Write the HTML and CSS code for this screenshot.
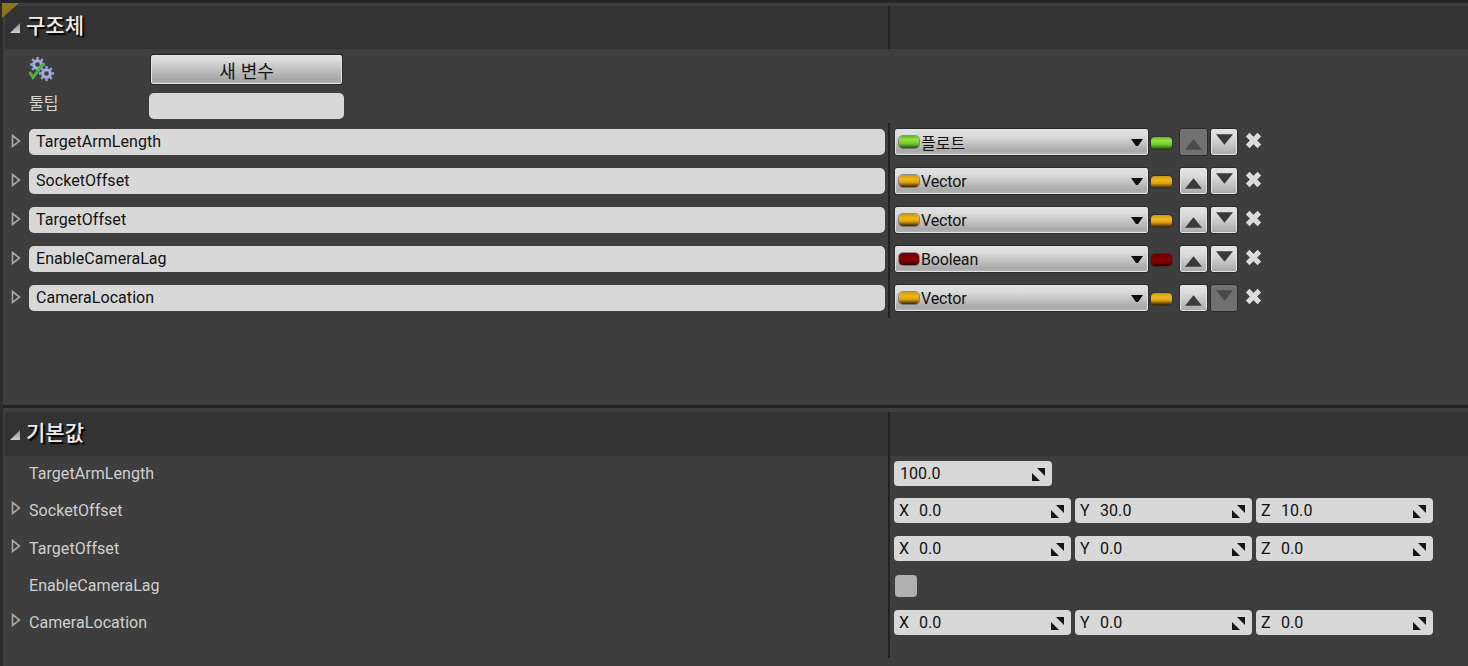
FILE: index.html
```html
<!DOCTYPE html>
<html lang="ko">
<head>
<meta charset="utf-8">
<title>구조체</title>
<link rel="stylesheet" href="styles.css">
</head>
<body>
<svg class="defs" width="0" height="0" aria-hidden="true">
  <defs>
    <linearGradient id="collapse-fill" x1="0" y1="0" x2="0" y2="1"><stop offset="0" stop-color="#8a8a8a"/><stop offset="1" stop-color="#d0d0d0"/></linearGradient>
    <symbol id="collapse" viewBox="0 0 12 12"><polygon points="11,1 11,11 1,11" fill="url(#collapse-fill)"/></symbol>
    <symbol id="expand" viewBox="0 0 10 14"><polygon points="1.5,1.5 8.5,7 1.5,12.5" fill="none" stroke="#a8a8a8" stroke-width="1.6"/></symbol>
    <symbol id="up" viewBox="0 0 18 11"><polygon points="9,0 18,11 0,11"/></symbol>
    <symbol id="down" viewBox="0 0 18 11"><polygon points="0,0 18,0 9,11"/></symbol>
    <symbol id="caret" viewBox="0 0 12 7"><path d="M0 0H12L7 7H5Z"/></symbol>
    <symbol id="cross" viewBox="0 0 16 16"><path d="M2.5 2.5L13.5 13.5M13.5 2.5L2.5 13.5" fill="none" stroke="#dcdcdc" stroke-width="4.8"/></symbol>
    <symbol id="drag" viewBox="0 0 14 14"><polygon points="6,1 14,1 14,9"/><polygon points="1,6 9,14 1,14"/></symbol>
    <symbol id="gear" viewBox="0 0 14 14"><circle cx="7" cy="7" r="3.6" fill="none" stroke="#a4aedb" stroke-width="2.8"/><path d="M7 0V3M7 11V14M0 7H3M11 7H14M2 2L4 4M10 10L12 12M12 2L10 4M4 10L2 12" stroke="#98a2d0" stroke-width="2.2"/></symbol>
  </defs>
</svg>
<main class="panel">
  <span class="corner"></span>

  <section class="section first">
    <header class="head">
      <h2 class="title"><svg class="collapse"><use href="#collapse"/></svg>구조체</h2>
      <div class="head-right"></div>
    </header>
    <div class="new-row">
      <svg class="gears" viewBox="0 0 26 24" aria-hidden="true">
        <use href="#gear" x="1" y="0" width="15" height="15"/>
        <use href="#gear" x="10" y="9" width="15" height="15"/>
        <path d="M0.5 15L4 20.5L15 6" fill="none" stroke="#4fb04a" stroke-width="3"/>
      </svg>
      <button class="new-btn">새 변수</button>
    </div>
    <div class="tip-row">
      <span class="tip-label">툴팁</span>
      <span class="tip-input"></span>
    </div>
    <div class="members">
      <div class="member">
        <div class="member-left"><svg class="expand"><use href="#expand"/></svg><span class="name">TargetArmLength</span></div>
        <div class="member-right">
          <div class="select"><i class="pill green"></i><span class="select-text ko">플로트</span><svg class="caret"><use href="#caret"/></svg></div>
          <i class="pin green"></i>
          <button class="move up off"><svg class="tri"><use href="#up"/></svg></button>
          <button class="move dn"><svg class="tri"><use href="#down"/></svg></button>
          <svg class="cross"><use href="#cross"/></svg>
        </div>
      </div>
      <div class="member">
        <div class="member-left"><svg class="expand"><use href="#expand"/></svg><span class="name">SocketOffset</span></div>
        <div class="member-right">
          <div class="select"><i class="pill gold"></i><span class="select-text">Vector</span><svg class="caret"><use href="#caret"/></svg></div>
          <i class="pin gold"></i>
          <button class="move up"><svg class="tri"><use href="#up"/></svg></button>
          <button class="move dn"><svg class="tri"><use href="#down"/></svg></button>
          <svg class="cross"><use href="#cross"/></svg>
        </div>
      </div>
      <div class="member">
        <div class="member-left"><svg class="expand"><use href="#expand"/></svg><span class="name">TargetOffset</span></div>
        <div class="member-right">
          <div class="select"><i class="pill gold"></i><span class="select-text">Vector</span><svg class="caret"><use href="#caret"/></svg></div>
          <i class="pin gold"></i>
          <button class="move up"><svg class="tri"><use href="#up"/></svg></button>
          <button class="move dn"><svg class="tri"><use href="#down"/></svg></button>
          <svg class="cross"><use href="#cross"/></svg>
        </div>
      </div>
      <div class="member">
        <div class="member-left"><svg class="expand"><use href="#expand"/></svg><span class="name">EnableCameraLag</span></div>
        <div class="member-right">
          <div class="select"><i class="pill red"></i><span class="select-text">Boolean</span><svg class="caret"><use href="#caret"/></svg></div>
          <i class="pin red"></i>
          <button class="move up"><svg class="tri"><use href="#up"/></svg></button>
          <button class="move dn"><svg class="tri"><use href="#down"/></svg></button>
          <svg class="cross"><use href="#cross"/></svg>
        </div>
      </div>
      <div class="member">
        <div class="member-left"><svg class="expand"><use href="#expand"/></svg><span class="name">CameraLocation</span></div>
        <div class="member-right">
          <div class="select"><i class="pill gold"></i><span class="select-text">Vector</span><svg class="caret"><use href="#caret"/></svg></div>
          <i class="pin gold"></i>
          <button class="move up"><svg class="tri"><use href="#up"/></svg></button>
          <button class="move dn off"><svg class="tri"><use href="#down"/></svg></button>
          <svg class="cross"><use href="#cross"/></svg>
        </div>
      </div>
    </div>
  </section>

  <div class="rule"></div>

  <section class="section">
    <header class="head second">
      <h2 class="title"><svg class="collapse"><use href="#collapse"/></svg>기본값</h2>
      <div class="head-right"></div>
    </header>
    <div class="defaults">
      <div class="drow r1">
        <div class="dleft"><span class="dlabel">TargetArmLength</span></div>
        <div class="dright"><div class="field single"><span class="fval">100.0</span><svg class="drag"><use href="#drag"/></svg></div></div>
      </div>
      <div class="drow r2">
        <div class="dleft"><svg class="expand"><use href="#expand"/></svg><span class="dlabel">SocketOffset</span></div>
        <div class="dright">
          <div class="field"><span class="axis">X</span><span class="fval">0.0</span><svg class="drag"><use href="#drag"/></svg></div>
          <div class="field"><span class="axis">Y</span><span class="fval">30.0</span><svg class="drag"><use href="#drag"/></svg></div>
          <div class="field"><span class="axis">Z</span><span class="fval">10.0</span><svg class="drag"><use href="#drag"/></svg></div>
        </div>
      </div>
      <div class="drow r2">
        <div class="dleft"><svg class="expand"><use href="#expand"/></svg><span class="dlabel">TargetOffset</span></div>
        <div class="dright">
          <div class="field"><span class="axis">X</span><span class="fval">0.0</span><svg class="drag"><use href="#drag"/></svg></div>
          <div class="field"><span class="axis">Y</span><span class="fval">0.0</span><svg class="drag"><use href="#drag"/></svg></div>
          <div class="field"><span class="axis">Z</span><span class="fval">0.0</span><svg class="drag"><use href="#drag"/></svg></div>
        </div>
      </div>
      <div class="drow r4">
        <div class="dleft"><span class="dlabel">EnableCameraLag</span></div>
        <div class="dright"><span class="check"></span></div>
      </div>
      <div class="drow r5">
        <div class="dleft"><svg class="expand"><use href="#expand"/></svg><span class="dlabel">CameraLocation</span></div>
        <div class="dright">
          <div class="field"><span class="axis">X</span><span class="fval">0.0</span><svg class="drag"><use href="#drag"/></svg></div>
          <div class="field"><span class="axis">Y</span><span class="fval">0.0</span><svg class="drag"><use href="#drag"/></svg></div>
          <div class="field"><span class="axis">Z</span><span class="fval">0.0</span><svg class="drag"><use href="#drag"/></svg></div>
        </div>
      </div>
    </div>
  </section>
</main>
</body>
</html>
```
FILE: styles.css
```css
* { box-sizing: border-box; }
html, body { margin: 0; height: 100%; overflow: hidden; }
body {
  background: #3e3e3e;
  font-family: Roboto, "Noto Sans CJK KR", sans-serif;
  font-size: 16px;
  letter-spacing: .06px;
  color: #d4d4d4;
}
.defs { position: absolute; }
.panel {
  position: relative;
  height: 666px;
  border-top: 3px solid #252525;
  border-left: 3px solid #2b2b2b;
  padding: 3px 0 0 2px;
  background: #3e3e3e;
}
.corner {
  position: absolute;
  left: -1px;
  top: 0;
  width: 17px;
  height: 15px;
  background: #8f7420;
  clip-path: polygon(0 0, 100% 0, 0 100%);
}
.section.first { height: 399px; }

.head { display: flex; height: 43px; background: #333333; }
.head.second { height: 44px; }
.title {
  display: flex;
  align-items: center;
  width: 883px;
  margin: 0;
  padding: 0 0 7px 4px;
  font-family: "Noto Sans CJK KR", sans-serif;
  font-size: 21px;
  font-weight: 500;
  letter-spacing: 0;
  color: #ececec;
  text-shadow: 2px 2px 1px #000;
}
.collapse { width: 12px; height: 12px; margin: 8px 5px 0 0; }
.head-right { flex: 1; border-left: 2px solid #222222; }

.new-row { display: flex; align-items: flex-start; height: 41px; padding: 5px 0 0 24px; }
.gears { width: 26px; height: 24px; margin: 3px 95px 0 0; }
.new-btn {
  width: 193px;
  height: 31px;
  padding: 0;
  border: 1px solid #262626;
  border-radius: 3px;
  box-shadow: inset 0 0 0 1px #e6e6e6;
  background: linear-gradient(#e2e2e2, #dcdcdc 15%, #a6a6a6 85%, #b4b4b4);
  font-family: "Noto Sans CJK KR", sans-serif;
  font-size: 18px;
  line-height: 1;
  color: #151515;
}
.tip-row { display: flex; align-items: center; height: 26px; margin-top: 3px; padding-left: 24px; }
.tip-label { width: 120px; margin-top: -9px; font-family: "Noto Sans CJK KR", sans-serif; font-size: 16px; letter-spacing: 0; }
.tip-input { width: 195px; height: 26px; border-radius: 5px; background: #d8d8d8; }

.members { margin-top: 4px; }
.member { display: flex; height: 39px; }
.member-left { display: flex; width: 883px; padding: 6px 3px 0 6px; }
.expand { flex: none; width: 10px; height: 14px; margin-right: 8px; margin-top: 5px; }
.name {
  flex: 1;
  height: 26px;
  padding-left: 7px;
  border-radius: 5px;
  background: #d8d8d8;
  color: #111;
  line-height: 25px;
}
.member-right {
  flex: 1;
  display: flex;
  align-items: flex-start;
  padding: 5px 0 0 4px;
  border-left: 2px solid #222222;
}
.select {
  display: flex;
  align-items: center;
  width: 255px;
  height: 28px;
  padding: 0 4px;
  border: 1px solid #2a2a2a;
  border-radius: 3px;
  box-shadow: inset 0 0 0 1px #e4e4e4;
  background: linear-gradient(#e2e2e2, #dcdcdc 25%, #a9a9a9 85%, #b6b6b6);
}
.select-text { flex: 1; margin-left: 2px; letter-spacing: -.15px; color: #111; }
.select-text.ko { font-family: "Noto Sans CJK KR", sans-serif; letter-spacing: 0; }
.caret { width: 12px; height: 7px; margin-right: 1px; fill: #0c0c0c; }
.pill, .pin {
  display: block;
  flex: none;
  border-radius: 4px;
  box-shadow: 0 0 0 1px rgba(30, 30, 30, .4);
}
.pill { width: 20px; height: 12px; }
.pin { width: 21px; height: 12px; margin: 9px 7px 0 2px; }
.green { background: linear-gradient(#5fb82a, #96e23e 30%, #6ec82c 65%, #2a4f12); }
.gold { background: linear-gradient(#c79a10, #f0b71a 35%, #dc9e12 62%, #362706); }
.red { background: linear-gradient(#6e0000, #880000 50%, #760000 72%, #2a0000); }
.move {
  flex: none;
  display: flex;
  align-items: center;
  justify-content: center;
  width: 29px;
  height: 28px;
  margin-right: 2px;
  padding: 0;
  border: 1px solid #2a2a2a;
  border-radius: 3px;
  box-shadow: inset 0 0 0 1px #e4e4e4;
  background: linear-gradient(#e4e4e4, #dcdcdc 30%, #a8a8a8);
}
.move + .move { width: 28px; margin-right: 0; }
.tri { display: block; width: 17px; height: 11px; fill: #3a3a3a; }
.move.up .tri { margin-top: 5px; }
.move.dn .tri { margin-top: -5px; }
.move.off { background: #717171; box-shadow: none; }
.move.off .tri { fill: #494949; }
.cross { width: 17px; height: 17px; margin: 4px 0 0 7px; }

.rule { height: 3px; background: #222222; margin-left: -2px; }
.section + .rule + .section { margin-top: 4px; }
.drow { display: flex; }
.r1 { height: 36px; }
.r2 { height: 38px; }
.r4 { height: 36px; }
.r5 { height: 54px; }
.dleft { display: flex; align-items: flex-start; width: 883px; padding-left: 6px; }
.dlabel { margin-left: 18px; padding-top: 5px; height: 31px; line-height: 25px; color: #cfcfcf; }
.dleft .expand + .dlabel { margin-left: 8px; padding-top: 6px; }
.dleft .expand { margin: 9px 0 0 0; }
.dright {
  flex: 1;
  display: flex;
  gap: 4px;
  align-items: flex-start;
  padding: 6px 0 0 4px;
  border-left: 2px solid #222222;
}
.r1 .dright { padding-top: 5px; }
.r4 .dright { padding: 7px 0 0 5px; }
.field {
  display: flex;
  align-items: center;
  width: 177px;
  height: 25px;
  padding: 0 7px 0 5px;
  border-radius: 4px;
  background: #d8d8d8;
  color: #111;
}
.field.single { width: 158px; padding-left: 6px; }
.axis { width: 20px; }
.fval { flex: 1; }
.drag { width: 14px; height: 14px; fill: #151515; }
.check { width: 22px; height: 22px; border-radius: 4px; background: #b0b0b0; }
```
